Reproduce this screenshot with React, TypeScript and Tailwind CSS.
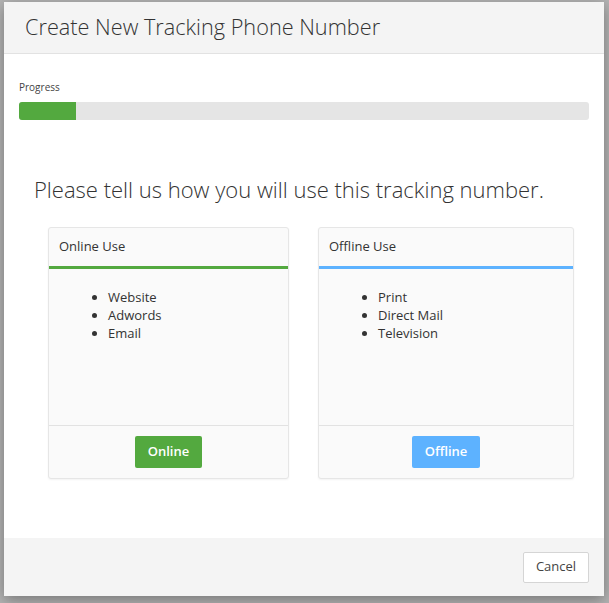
const CARDS = [
  {
    id: "online",
    title: "Online Use",
    items: ["Website", "Adwords", "Email"],
    cta: "Online",
    width: "w-[241px]",
    accent: "border-[#53a93f]",
    button: "bg-[#53a93f]",
  },
  {
    id: "offline",
    title: "Offline Use",
    items: ["Print", "Direct Mail", "Television"],
    cta: "Offline",
    width: "w-[256px]",
    accent: "border-[#5db2ff]",
    button: "bg-[#5db2ff]",
  },
];

export default function App() {
  return (
    <div
      className="w-[609px] h-[603px] bg-[#b4b4b4] pt-[2px] pl-[4px] overflow-hidden"
      style={{ fontFamily: '"Open Sans", "Noto Sans", sans-serif' }}
    >
      {/* Modal */}
      <div className="w-[600px] h-[594px] bg-white flex flex-col shadow-[0_4px_14px_rgba(0,0,0,0.35)]">
        <div className="h-[52px] bg-[#f4f4f4] border-b border-[#e2e2e2] flex items-center pl-[21px]">
          <h1 className="text-[21.7px] font-light text-[#333]">
            Create New Tracking Phone Number
          </h1>
        </div>

        <div className="flex-1 px-[15px] pt-[26px]">
          <div className="text-[10px] text-[#444] leading-[14px]">Progress</div>
          <div className="mt-[8px] h-[18px] bg-[#e5e5e5] rounded-[3px] overflow-hidden">
            <div className="h-full w-[57px] bg-[#53a93f]" />
          </div>

          <p className="mt-[55px] ml-[15px] text-[22px] font-light text-[#333] leading-[28px]">
            Please tell us how you will use this tracking number.
          </p>

          <div className="mt-[24px] ml-[29px] flex gap-[29px]">
            {CARDS.map((card) => (
              <div
                key={card.id}
                className={`${card.width} h-[252px] bg-[#fafafa] border border-[#e6e6e6] rounded-[3px] flex flex-col shadow-[0_1px_2px_rgba(0,0,0,0.05)]`}
              >
                <div
                  className={`h-[41px] border-b-[3px] ${card.accent} flex items-center pl-[10px] text-[13px] text-[#333]`}
                >
                  {card.title}
                </div>
                <ul className="flex-1 list-disc pl-[59px] pt-[19px] text-[13px] leading-[18px] text-[#333]">
                  {card.items.map((item) => (
                    <li key={item}>{item}</li>
                  ))}
                </ul>
                <div className="h-[53px] border-t border-[#e2e2e2] flex items-center justify-center">
                  <button
                    className={`${card.button} text-white text-[13px] font-semibold h-[32px] px-[13px] rounded-[2px]`}
                  >
                    {card.cta}
                  </button>
                </div>
              </div>
            ))}
          </div>
        </div>

        <div className="h-[58px] bg-[#f4f4f4] flex items-center justify-end pr-[15px]">
          <button className="h-[31px] w-[66px] bg-white border border-[#d5d5d5] rounded-[2px] text-[13px] text-[#444]">
            Cancel
          </button>
        </div>
      </div>
    </div>
  );
}
